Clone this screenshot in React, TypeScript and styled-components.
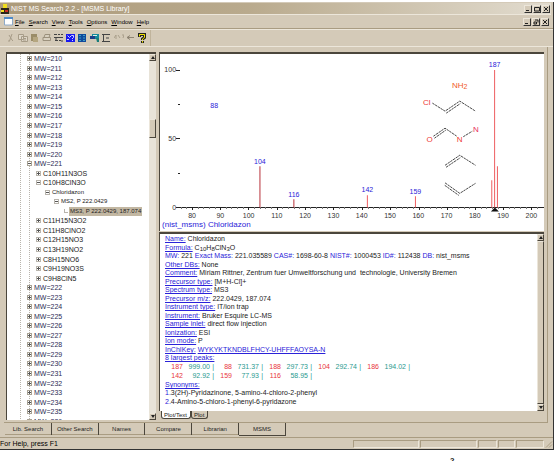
import React from 'react';
import styled, { createGlobalStyle } from 'styled-components';

const face = '#d4cab8';
const light = '#ece6da';
const shade = '#a99c82';
const dark = '#4b463c';
const blue = '#2a22d8';
const sans = '"Liberation Sans", Arial, sans-serif';

const GlobalStyle = createGlobalStyle`
  * { box-sizing: border-box; }
  body { margin: 0; background: #fff; font-family: ${sans}; font-size: 7px; color: #222; overflow: hidden; }
  button { font: inherit; color: inherit; padding: 0; margin: 0; border: 0; background: none; }
  ul { margin: 0; padding: 0; list-style: none; }
`;

const Page = styled.div`
  display: flex;
  flex-direction: column;
  height: 100vh;
  padding: 2px 2px 0 0;
`;

const Window = styled.div`
  flex: 1;
  min-height: 0;
  display: flex;
  flex-direction: column;
  background: ${face};
  border-right: 1px solid #333;
  border-bottom: 1px solid #333;
`;

const TitleBar = styled.header`
  display: flex;
  align-items: center;
  height: 12px;
  margin: 1px 2px 0 0;
  padding-left: 1px;
  background: linear-gradient(90deg, #ac9a7a, #b9aa8d 45%, #e2dccf);
  border-bottom: 1px solid ${light};
`;

const Title = styled.h1`
  flex: 1;
  margin: 0 0 0 2px;
  font-size: 7px;
  font-weight: normal;
  color: #fff;
`;

const WindowButtons = styled.div`
  display: flex;
  margin-left: auto;
`;

const WindowButton = styled.button`
  display: grid;
  place-items: center;
  width: 8px;
  height: 8px;
  border: 1px solid;
  border-color: ${light} #333 #333 ${light};
  background: ${face};
  margin-right: 1px;
`;

const MenuBar = styled.nav`
  display: flex;
  align-items: center;
  height: 14px;
  padding: 0 3px 0 4px;
  border-bottom: 1px solid ${shade};
`;

const MenuButton = styled.button`
  margin-right: 4px;
  font-size: 6px;
  color: #000;
  &::first-letter { text-decoration: underline; }
`;

const Toolbar = styled.div`
  display: flex;
  align-items: center;
  height: 18px;
  border-top: 1px solid ${light};
  border-bottom: 1px solid ${light};
`;

const ToolGroup = styled.div`
  display: flex;
  align-items: center;
  gap: 2px;
  height: 16px;
  width: 151px;
  padding-left: 6px;
  border-right: 1px solid #c0b49c;
`;

const ToolButton = styled.button`
  display: flex;
  width: 10px;
  height: 10px;
`;

const Workspace = styled.main`
  flex: 1;
  min-height: 0;
  display: flex;
  margin: 0 5px 0 4px;
  padding: 5px 3px 2px 2px;
  gap: 3px;
  border: solid ${shade};
  border-width: 0 1px 1px 0;
`;

const TreePane = styled.section`
  display: flex;
  width: 150px;
  border: solid ${dark};
  border-width: 2px 0 0 1px;
  background: #fff;
  overflow: hidden;
`;

const TreeScroll = styled.div`
  flex: 1;
  min-width: 0;
  overflow: hidden;
`;

const Tree = styled.ul`
  display: grid;
  grid-auto-rows: 1fr;
  height: 372px;
  background: repeating-linear-gradient(#b8b4ac 0 1px, #fff 1px 2px) 13px 0 / 1px 100% no-repeat,
    repeating-linear-gradient(#b8b4ac 0 1px, #fff 1px 2px) 22px 0 / 1px 100% no-repeat;
`;

const Node = styled.li<{ $level: number }>`
  display: flex;
  align-items: center;
  gap: 1px;
  padding-left: ${p => 20 + (p.$level - 1) * 9}px;
  white-space: nowrap;
  line-height: 9px;
`;

const Expander = styled.button`
  display: flex;
  flex: none;
  width: 5px;
  height: 5px;
`;

const NodeLabel = styled.span<{ $selected?: boolean; $level: number }>`
  font-size: ${p => (p.$level < 3 ? 7 : 6)}px;
  padding: 0 1px;
  color: ${p => (p.$level === 1 ? '#2c2d56' : '#222')};
  background: ${p => (p.$selected ? '#c2b7a2' : 'transparent')};
`;

const Bar = styled.div`
  display: flex;
  flex-direction: column;
  width: 7px;
  background: #e8e3d8;
`;

const BarButton = styled.button`
  display: grid;
  place-items: center;
  height: 7px;
  background: ${face};
  border: 1px solid;
  border-color: ${light} ${dark} ${dark} ${light};
`;

const Track = styled.div<{ $top: number; $fill?: boolean }>`
  flex: 1;
  display: flex;
  flex-direction: column;
  padding-top: ${p => p.$top}px;
  &::before {
    content: '';
    height: ${p => (p.$fill ? '100%' : '17px')};
    background: ${face};
    border: 1px solid;
    border-color: ${light} ${dark} ${dark} ${light};
  }
`;

const RightColumn = styled.div`
  flex: 1;
  min-width: 0;
  display: flex;
  flex-direction: column;
`;

const PlotPane = styled.section`
  border: solid ${dark};
  border-width: 2px 0 0 1px;
  background: #fff;
`;

const Plot = styled.svg`
  display: block;
  width: 100%;
  height: auto;
  font-size: 7px;
`;

const DetailPane = styled.section`
  flex: 1;
  min-height: 0;
  display: flex;
  margin-top: 1px;
  border: solid ${dark};
  border-width: 2px 0 0 1px;
  background: #fff;
`;

const Details = styled.div`
  flex: 1;
  min-width: 0;
  display: grid;
  grid-auto-rows: 1fr;
  height: 171px;
  padding-left: 5px;
  line-height: 9px;
  white-space: pre;
`;

const Line = styled.div`
  min-height: 0;
  & sub { font-size: 6px; line-height: 1px; vertical-align: -1px; }
`;

const Label = styled.span<{ $plain?: boolean }>`
  color: ${blue};
  text-decoration: ${p => (p.$plain ? 'none' : 'underline')};
`;

const KeyLink = styled.a`
  color: ${blue};
`;

const Peaks = styled.div`
  display: grid;
  grid-template-columns: repeat(5, 49px);
`;

const Peak = styled.span`
  display: grid;
  grid-template-columns: 18px 27px 4px;
  text-align: right;
  color: #2a9a90;
  & > b { font-weight: normal; color: #e8363c; }
`;

const ViewTabs = styled.div`
  display: flex;
  height: 9px;
  padding-left: 2px;
  font-size: 6px;
`;

const ViewTab = styled.button<{ $active?: boolean }>`
  height: 8px;
  padding: 0 3px 0 2px;
  line-height: 8px;
  border: solid ${dark};
  border-width: 0 1px 1px 1px;
  border-radius: 0 0 3px 3px;
  background: ${p => (p.$active ? '#fff' : face)};
`;

const PageTabs = styled.div`
  display: flex;
  height: 14px;
  width: 281px;
  margin-left: 5px;
`;

const PageTab = styled.button<{ $active?: boolean }>`
  flex: 1;
  height: ${p => (p.$active ? 13 : 12)}px;
  font-size: 6px;
  border: solid ${dark};
  border-width: 0 1px ${p => (p.$active ? 1 : 0)}px 0;
  box-shadow: inset 0 ${p => (p.$active ? 0 : -1)}px ${shade};
`;

const StatusBar = styled.footer`
  display: flex;
  align-items: center;
  height: 12px;
  border-top: 1px solid ${shade};
  font-size: 7px;
  line-height: 10px;
  color: #000;
`;

const StatusText = styled.span`
  flex: 1;
`;

const StatusCell = styled.span<{ $w: number }>`
  width: ${p => p.$w}px;
  height: 8px;
  margin-right: 1px;
  border: 1px solid;
  border-color: ${shade} ${light} ${light} ${shade};
`;

const PageNote = styled.div`
  height: 11px;
  padding: 6px 0 0 450px;
  font-size: 8px;
  font-weight: bold;
  line-height: 9px;
  overflow: hidden;
`;

type TreeItem = { text: string; level: number; icon: 'plus' | 'minus' | 'none'; selected?: boolean };

const mw = (n: number): TreeItem => ({ text: `MW=${n}`, level: 1, icon: n === 221 ? 'minus' : 'plus' });
const range = (from: number, to: number) => Array.from({ length: to - from + 1 }, (_, i) => from + i);

const treeItems: TreeItem[] = [
  ...range(210, 221).map(mw),
  { text: 'C10H11N3OS', level: 2, icon: 'plus' },
  { text: 'C10H8ClN3O', level: 2, icon: 'minus' },
  { text: 'Chloridazon', level: 3, icon: 'minus' },
  { text: 'MS2, P 222.0429', level: 4, icon: 'minus' },
  { text: 'MS3, P 222.0429, 187.074', level: 5, icon: 'none', selected: true },
  ...['C11H15N3O2', 'C11H8ClNO2', 'C12H15NO3', 'C13H19NO2', 'C8H15NO6', 'C9H19NO3S', 'C9H8ClN5'].map(
    (text): TreeItem => ({ text, level: 2, icon: 'plus' })
  ),
  ...range(222, 236).map(mw),
];

const NodeIcon = ({ item }: { item: TreeItem }) => (
  <svg width="5" height="5" viewBox="0 0 5 5" shapeRendering="crispEdges">
    {item.icon === 'none' ? (
      <path d="M1 0v3h4" fill="none" stroke="#b8b4ac" />
    ) : (
      <>
        <rect
          x="0.5"
          y="0.5"
          width="4"
          height="4"
          fill="#fff"
          stroke={item.level === 1 ? '#a8a294' : '#b8b4ac'}
        />
        <path d={item.icon === 'plus' ? 'M1 2h3v1h-3zM2 1h1v3h-1z' : 'M1 2h3v1h-3z'} fill="#555" />
      </>
    )}
  </svg>
);

const Arrow = ({ down }: { down?: boolean }) => (
  <svg width="4" height="3" viewBox="0 0 4 3">
    <path d={down ? 'M0 0h4l-2 3z' : 'M0 3h4l-2 -3z'} fill="#222" />
  </svg>
);

const ScrollBar = ({ top, fill }: { top: number; fill?: boolean }) => (
  <Bar>
    <BarButton aria-label="Scroll up"><Arrow /></BarButton>
    <Track $top={top} $fill={fill} />
    <BarButton aria-label="Scroll down"><Arrow down /></BarButton>
  </Bar>
);

const peaks = [
  { mz: 104, top: 112, label: 110 },
  { mz: 116, top: 145, label: 143 },
  { mz: 142, top: 141, label: 138 },
  { mz: 159, top: 142, label: 140 },
  { mz: 186, top: 126 },
  { mz: 187, top: 16, label: 13 },
  { mz: 188, top: 112 },
];
const mzX = (mz: number) => 32 + (mz - 80) * 2.82;
const intensityY = (v: number) => 153.5 - v * 1.375;

const Spectrum = () => (
  <Plot viewBox="0 0 383 177" role="img" aria-label="Chloridazon spectrum">
    <g stroke="#222" shapeRendering="crispEdges">
      <path d="M17 153.5H383" />
      {[0, 25, 50, 75, 100].map(v => (
        <path key={v} d={`M${v % 50 ? 18 : 16} ${Math.floor(intensityY(v)) + 0.5}H20`} />
      ))}
      {range(38, 101).map(i => (
        <path key={i} d={`M${Math.round(mzX(i * 2)) + 0.5} 153v${i % 5 ? 2 : 3}`} stroke={i % 5 ? '#777' : '#222'} />
      ))}
    </g>
    <path d="M330 157h8l-4-4z" fill="#111" />
    <g fill="#333" textAnchor="end">
      <text x="16" y="18">100</text>
      <text x="16" y="87">50</text>
      <text x="16" y="156">0</text>
    </g>
    <g fill="#333" textAnchor="middle">
      {range(8, 20).map(i => <text key={i} x={mzX(i * 10)} y="164">{i * 10}</text>)}
    </g>
    {peaks.map(p => (
      <React.Fragment key={p.mz}>
        <path d={`M${mzX(p.mz)} ${p.top}V153`} stroke={p.mz < 120 ? '#b8323a' : '#ee5e60'} />
        {p.label && <text x={mzX(p.mz)} y={p.label} textAnchor="middle" fill={blue}>{p.mz}</text>}
      </React.Fragment>
    ))}
    <text x="54" y="54" textAnchor="middle" fill={blue}>88</text>
    <text x="2" y="173" fill={blue} fontSize="8">(nist_msms) Chloridazon</text>
    <g fill="#ee3a34" textAnchor="middle" fontSize="8">
      <text x="299" y="34" fill="#f0592c">NH<tspan fontSize="7" dy="1">2</tspan></text>
      <text x="266" y="51">Cl</text>
      <text x="269" y="88">O</text>
      <text x="299" y="88">N</text>
      <text x="315" y="78" fill="#e8305a">N</text>
    </g>
    <path
      d="M271.700 49L284.300 57L299 47L314.700 57M285.500 59L299.500 49.500
         M272.700 82L284.300 74L296 82M273.700 84L285 76M302.500 82.500L311.500 77
         M284.300 111L299 101L314.700 111M285.300 113L299.500 103.500
         M284.300 128.500L299 139L314.700 129M284 131L298 141"
      fill="none"
      stroke="#333"
      strokeWidth="0.900"
      strokeDasharray="2.500 0.700"
    />
  </Plot>
);

const peakRows = [
  [['187', '999.00'], ['88', '731.37'], ['188', '297.73'], ['104', '292.74'], ['186', '194.02']],
  [['142', '92.92'], ['159', '77.93'], ['116', '58.95']],
];

const toolIcons: [string, React.ReactNode][] = [
  ['Cut', <path key="i" d="M6 1L3.500 8M3 2L6 7M2 8h2M6 7l1 1" stroke="#a79c88" fill="none" />],
  ['Copy', <path key="i" d="M.5 1.500h5v5h-5zM3.500 3.500h6v5h-6zM5 5.500h3M5 7h3" stroke="#a79c88" fill="#ddd5c6" />],
  ['Paste', <g key="i"><path d="M1 1h6v7h-6z" fill="#9a8c68" /><path d="M3 4h5v5h-5z" fill="#b5a680" /></g>],
  ['Print', <path key="i" d="M3 1.500h5l-1 3h-5zM1 4.500h7.500v3h-7.500z" stroke="#9b907c" fill="#d8d0c0" />],
  ['Options', <path key="i" d="M0 1.500h3M4 1.500h2M7 1.500h2M0 4.500h9M1 7.500h3M5 7.500h2M8 7v2M2 5v2" stroke="#444" fill="none" />],
  ['Library search', <g key="i"><path d="M0 1h9v8h-9z" fill="#1818f0" /><path d="M1.500 2.500l2 2l2-2h2v2l-1.500 1.500M6 7.500h1M1 6.500h2" stroke="#cfd4ff" fill="none" /></g>],
  ['Compare', <g key="i"><path d="M0 1h8v8h-8z" fill="#104a9c" /><path d="M1 2.500h2M5 2.500h2M1 5h2M5 5h2M1 7.500h2M5 7.500h2" stroke="#3fa0c8" /></g>],
  ['Transfer', <g key="i"><path d="M2 1h7v5h-7z" fill="#158b9c" /><path d="M0 3h5v3h-5z" fill="#1d3f88" /><path d="M6 5h3v4h-2z" fill="#187d7a" /><path d="M3 2.500h4" stroke="#d9f4ee" /></g>],
  ['Window layout', <path key="i" d="M0 1.500h8M1.500 1v7M0 8.500h8M4 5h3" stroke="#444" fill="none" />],
  ['Structure', <path key="i" d="M0 5l2-3v4M4 2l2 3M8 2h2l-1 3" stroke="#aaa08c" fill="none" />],
  ['Back', <path key="i" d="M8 4.500H1L4 2.500M1 4.500l3 2" stroke="#8e8473" fill="none" />],
  ['Help', (
    <g key="i" fill="none">
      <path d="M1.500 4V1.500h5v3L4.500 6v1M4.500 8v2" stroke="#222" strokeWidth="3" />
      <path d="M1.500 3.500V1.500h5v3L4.500 6v1M4.500 8v1.500" stroke="#f5e600" strokeWidth="1" />
    </g>
  )],
];

const Win = ({ label, d }: { label: string; d: string }) => (
  <WindowButton aria-label={label}>
    <svg width="6" height="6" viewBox="0 0 6 6"><path d={d} stroke="#222" fill="none" /></svg>
  </WindowButton>
);

export default function App() {
  return (
    <Page>
      <GlobalStyle />
      <Window>
        <TitleBar>
          <svg width="8" height="10" viewBox="0 0 8 10">
            <path d="M0 4h8v6h-8z" fill="#2a2418" />
            <path d="M2 0h4v4h-4zM0 6h3v2h-3z" fill="#f0df20" />
            <path d="M4 6h3v2h-3z" fill="#c62a24" />
          </svg>
          <Title>NIST MS Search 2.2 - [MSMS Library]</Title>
          <WindowButtons>
            <Win label="Minimize" d="M1 4.500h3" />
            <Win label="Maximize" d="M.5 1.500h5v3.500h-5z" />
            <Win label="Close" d="M1 1l4 4M5 1l-4 4" />
          </WindowButtons>
        </TitleBar>
        <MenuBar>
          <svg width="11" height="9" viewBox="0 0 11 9">
            <path d="M.5 .5h8v7.500h-8z" fill="#fff" stroke="#8eaaca" />
            <path d="M0 0h9v2h-9z" fill="#4f8ac8" />
          </svg>
          {['File', 'Search', 'View', 'Tools', 'Options', 'Window', 'Help'].map(m => (
            <MenuButton key={m}>{m}</MenuButton>
          ))}
          <WindowButtons>
            <Win label="Minimize document" d="M1 4.500h3" />
            <Win label="Restore document" d="M2 1h3v2.500M1 3h2.500v2h-2.500z" />
            <Win label="Close document" d="M1 1l4 4M5 1l-4 4" />
          </WindowButtons>
        </MenuBar>
        <Toolbar>
          <ToolGroup>
            {toolIcons.map(([name, art]) => (
              <ToolButton key={name} aria-label={name}>
                <svg width="10" height="10" viewBox="0 0 10 10">{art}</svg>
              </ToolButton>
            ))}
          </ToolGroup>
        </Toolbar>
        <Workspace>
          <TreePane>
            <TreeScroll>
              <Tree>
                {treeItems.map(n => (
                  <Node key={n.text} $level={n.level}>
                    <Expander aria-label={n.text}><NodeIcon item={n} /></Expander>
                    <NodeLabel $level={n.level} $selected={n.selected}>{n.text}</NodeLabel>
                  </Node>
                ))}
              </Tree>
            </TreeScroll>
            <ScrollBar top={58} />
          </TreePane>
          <RightColumn>
            <PlotPane><Spectrum /></PlotPane>
            <DetailPane>
              <Details>
                <Line><Label>Name:</Label> Chloridazon</Line>
                <Line><Label>Formula:</Label> C<sub>10</sub>H<sub>8</sub>ClN<sub>3</sub>O</Line>
                <Line>
                  <Label $plain>MW:</Label> 221 <Label $plain>Exact Mass:</Label> 221.035589 <Label $plain>CAS#:</Label> 1698-60-8 <Label $plain>NIST#:</Label> 1000453 <Label $plain>ID#:</Label> 112438 <Label $plain>DB:</Label> nist_msms
                </Line>
                <Line><Label>Other DBs:</Label> None</Line>
                <Line><Label>Comment:</Label> Miriam Rittner, Zentrum fuer Umweltforschung und  technologie, University Bremen</Line>
                <Line><Label>Precursor type:</Label> [M+H-Cl]+</Line>
                <Line><Label>Spectrum type:</Label> MS3</Line>
                <Line><Label>Precursor m/z:</Label> 222.0429, 187.074</Line>
                <Line><Label>Instrument type:</Label> IT/ion trap</Line>
                <Line><Label>Instrument:</Label> Bruker Esquire LC-MS</Line>
                <Line><Label>Sample inlet:</Label> direct flow injection</Line>
                <Line><Label>Ionization:</Label> ESI</Line>
                <Line><Label>Ion mode:</Label> P</Line>
                <Line><Label>InChIKey:</Label> <KeyLink href="#inchikey">WYKYKTKNDBLFHCY-UHFFFAOYSA-N</KeyLink></Line>
                <Line><Label>8 largest peaks:</Label></Line>
                {peakRows.map((row, i) => (
                  <Peaks key={i}>
                    {row.map(([mz, v]) => <Peak key={mz}><b>{mz}</b><span>{v}</span><span>|</span></Peak>)}
                  </Peaks>
                ))}
                <Line><Label>Synonyms:</Label></Line>
                <Line><Label $plain>1.</Label>3(2H)-Pyridazinone, 5-amino-4-chloro-2-phenyl</Line>
                <Line><Label $plain>2.</Label>4-Amino-5-chloro-1-phenyl-6-pyridazone</Line>
              </Details>
              <ScrollBar top={0} fill />
            </DetailPane>
            <ViewTabs>
              <ViewTab $active>Plot/Text</ViewTab>
              <ViewTab>Plot</ViewTab>
            </ViewTabs>
          </RightColumn>
        </Workspace>
        <PageTabs>
          {['Lib. Search', 'Other Search', 'Names', 'Compare', 'Librarian', 'MSMS'].map(t => (
            <PageTab key={t} $active={t === 'MSMS'}>{t}</PageTab>
          ))}
        </PageTabs>
        <StatusBar>
          <StatusText>For Help, press F1</StatusText>
          <StatusCell $w={66} />
          <StatusCell $w={57} />
          <StatusCell $w={19} />
          <StatusCell $w={17} />
          <StatusCell $w={28} />
          <svg width="8" height="9" viewBox="0 0 8 9"><path d="M1 8.500l6-6M4 8.500l3-3" stroke={shade} /></svg>
        </StatusBar>
      </Window>
      <PageNote>2</PageNote>
    </Page>
  );
}
